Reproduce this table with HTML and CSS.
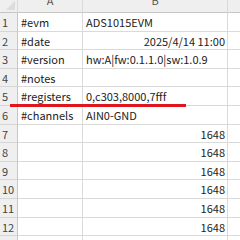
FILE: index.html
```html
<!DOCTYPE html>
<html lang="ja">
<head>
  <meta charset="UTF-8" />
  <title>log.csv</title>
  <link rel="stylesheet" href="styles.css">
</head>
<body>
  <div class="sheet">
    <div class="corner"><span class="tri"></span></div>
    <div class="colhead"><span>A</span></div>
    <div class="colhead"><span>B</span></div>
    <div class="colhead last"></div>

    <div class="rowhead">1</div><div class="cell">#evm</div><div class="cell">ADS1015EVM</div><div class="cell last"></div>
    <div class="rowhead">2</div><div class="cell">#date</div><div class="cell num">2025/4/14 11:00</div><div class="cell last"></div>
    <div class="rowhead">3</div><div class="cell">#version</div><div class="cell">hw:A|fw:0.1.1.0|sw:1.0.9</div><div class="cell last"></div>
    <div class="rowhead">4</div><div class="cell">#notes</div><div class="cell"></div><div class="cell last"></div>
    <div class="rowhead">5</div><div class="cell">#registers</div><div class="cell">0,c303,8000,7fff</div><div class="cell last"></div>
    <div class="rowhead">6</div><div class="cell">#channels</div><div class="cell">AIN0-GND</div><div class="cell last"></div>
    <div class="rowhead">7</div><div class="cell"></div><div class="cell num">1648</div><div class="cell last"></div>
    <div class="rowhead">8</div><div class="cell"></div><div class="cell num">1648</div><div class="cell last"></div>
    <div class="rowhead">9</div><div class="cell"></div><div class="cell num">1648</div><div class="cell last"></div>
    <div class="rowhead">10</div><div class="cell"></div><div class="cell num">1648</div><div class="cell last"></div>
    <div class="rowhead">11</div><div class="cell"></div><div class="cell num">1648</div><div class="cell last"></div>
    <div class="rowhead">12</div><div class="cell"></div><div class="cell num">1648</div><div class="cell last"></div>
    <div class="rowhead"></div><div class="cell"></div><div class="cell"></div><div class="cell last"></div>

    <!-- red marker under the register row -->
    <div class="marker"></div>
  </div>
</body>
</html>
```

FILE: styles.css
```css
* {
  box-sizing: border-box;
}

body {
  margin: 0;
  background: #fff;
  font-family: "Noto Sans CJK JP", "Noto Sans", sans-serif;
  font-size: 11px;
  color: #222;
  overflow: hidden;
}

.sheet {
  position: relative;
  display: grid;
  grid-template-columns: 18px 65px 145px 12px;
  grid-template-rows: 13px repeat(13, 18.6px);
  width: 240px;
}

.sheet > div {
  border-right: 1px solid #dadada;
  border-bottom: 1px solid #dadada;
  overflow: hidden;
  white-space: nowrap;
}

.sheet > .last {
  border-right: none;
}

.corner {
  position: relative;
  background: #efefef;
}

.corner .tri {
  position: absolute;
  right: 2px;
  bottom: 2px;
  width: 0;
  height: 0;
  border-left: 9px solid transparent;
  border-bottom: 9px solid #dcdcdc;
}

.sheet > .corner,
.sheet > .colhead {
  border-bottom-color: #c6c6c6;
}

.colhead {
  background: #efefef;
  color: #555;
  text-align: center;
}

.colhead span {
  display: block;
  line-height: 14px;
  margin-top: -7px;
}

.sheet > .rowhead {
  background: #efefef;
  color: #444;
  padding: 1px 0 0 2px;
  line-height: 16px;
  border-right-color: #c6c6c6;
  border-bottom-color: #d6d6d6;
}

.cell {
  padding: 1px 2px 0 3px;
  line-height: 16px;
}

.num {
  text-align: right;
}

.marker {
  position: absolute;
  left: 10px;
  top: 104px;
  width: 176px;
  height: 3px;
  background: #e0161c;
  border: none !important;
}
```
